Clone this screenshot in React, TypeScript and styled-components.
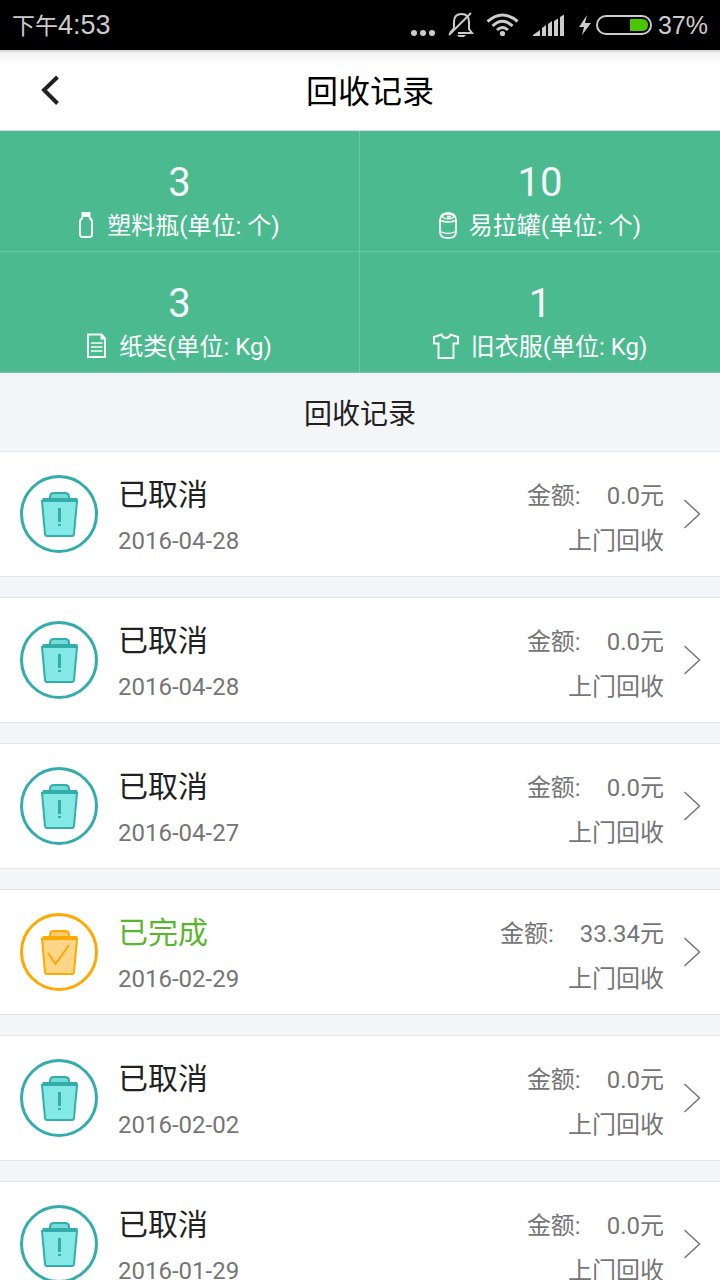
import React from 'react';
import styled, { createGlobalStyle } from 'styled-components';

const GlobalStyle = createGlobalStyle`
  * { box-sizing: border-box; }
  body {
    margin: 0;
    background: #f4f5f7;
    color: #212121;
    font-family: Roboto, "Noto Sans CJK SC", sans-serif;
  }
  h1, h2, h3, p, ul { margin: 0; padding: 0; font-weight: 400; }
`;

const Page = styled.div`
  width: 100%;
  height: 100vh;
  overflow: hidden;
`;

const StatusBar = styled.div`
  display: flex;
  align-items: center;
  justify-content: space-between;
  height: 50px;
  padding: 0 12px;
  background: #000;
  color: #ccc;
`;

const Clock = styled.span`
  font-family: "Liberation Sans", "Noto Sans CJK SC", sans-serif;
  font-size: 27px;
  line-height: 50px;
`;

const ClockPeriod = styled.span`
  font-size: 23px;
`;

const StatusIcons = styled.div`
  display: flex;
  align-items: center;
`;

const Battery = styled.span`
  padding-left: 6px;
  font-family: "Liberation Sans", sans-serif;
  font-size: 25px;
  line-height: 52px;
`;

const Header = styled.header`
  display: grid;
  grid-template-columns: 100px 1fr 80px;
  align-items: center;
  height: 81px;
  border-bottom: 1px solid #dcdcdc;
  background: linear-gradient(#d0d0d0 0, #f2f2f2 3px, #fff 16px);
`;

const BackButton = styled.button`
  display: flex;
  align-items: center;
  justify-content: center;
  height: 80px;
  padding: 0;
  border: 0;
  background: none;
  color: #212121;
`;

const Title = styled.h1`
  padding-top: 4px;
  color: #000;
  font-size: 32px;
  line-height: 40px;
  text-align: center;
`;

const Stats = styled.ul`
  display: grid;
  grid-template-columns: 1fr 1fr;
  list-style: none;
  background: #4bba8f;
  color: #fff;
`;

const StatCell = styled.li`
  display: flex;
  flex-direction: column;
  align-items: center;
  height: 121px;
  padding-top: 28px;
  border-bottom: 1px solid #6dc8a5;
  &:nth-child(odd) { border-right: 1px solid #6dc8a5; }
`;

const StatValue = styled.span`
  color: #f4f5f8;
  font-size: 40px;
  line-height: 48px;
`;

const StatLabel = styled.span<{ $gap: number }>`
  display: flex;
  align-items: center;
  gap: ${(p) => p.$gap}px;
  font-size: 24px;
  line-height: 34px;
  white-space: pre;
`;

const StatText = styled.span`
  padding-top: 2px;
`;

const SectionTitle = styled.h2`
  height: 78px;
  font-size: 28px;
  line-height: 84px;
  text-align: center;
`;

const RecordList = styled.ul`
  display: flex;
  flex-direction: column;
  gap: 20px;
  list-style: none;
`;

const RecordRow = styled.a`
  display: flex;
  align-items: center;
  height: 126px;
  padding: 0 18px 0 20px;
  border: solid #e2e3e5;
  border-width: 1px 0;
  background: #fff;
  color: #757575;
  font-size: 24px;
  text-decoration: none;
`;

const RecordMain = styled.div`
  flex: 1;
  padding: 6px 0 0 20px;
`;

const RecordState = styled.h3<{ $done: boolean }>`
  color: ${(p) => (p.$done ? '#5cb531' : '#212121')};
  font-size: 30px;
  line-height: 48px;
`;

const Line = styled.p`
  line-height: 45px;
`;

const RecordSide = styled.div`
  padding: 10px 19px 0 0;
  text-align: right;
`;

const Amount = styled.span`
  padding-left: 26px;
`;

const BottleIcon = () => (
  <svg width="14" height="26" viewBox="0 0 14 26" fill="none" stroke="#f8fafa" strokeWidth="2" aria-hidden="true">
    <path d="M2.500 0h9v5h-9z" fill="#f8fafa" stroke="none" />
    <path d="M4 5.500Q1 7 1 10v12q0 3 2.500 3h7q2.500 0 2.500-3V10q0-3-3-4.500" />
  </svg>
);

const CanIcon = () => (
  <svg width="18" height="27" viewBox="0 0 18 27" fill="none" stroke="#fff" strokeWidth="1.800" aria-hidden="true">
    <path d="M3.500 2.500Q1 4.500 1 8v11q0 4 2.500 6 5.500 2 11 0Q17 23 17 19V8q0-3.500-2.500-5.500Q9-.5 3.500 2.500z" />
    <ellipse cx="9" cy="4.500" rx="5.500" ry="2.300" strokeWidth="1.300" />
    <path d="M1.500 8.500Q9 11.500 16.500 8.500M1.500 19.500Q9 23.500 16.500 19.500" strokeWidth="1.400" />
    <path d="M8 4.700h4" strokeWidth="2" />
  </svg>
);

const PaperIcon = () => (
  <svg width="20" height="26" viewBox="0 0 20 26" fill="none" stroke="#f8fafa" strokeWidth="2" aria-hidden="true">
    <path d="M1 1.500h13.500L18 5.500V24H1z" />
    <path d="M13.500 1v5.500H19z" fill="#f8fafa" stroke="none" />
    <path d="M4 10h11.500M4 14h11.500M4 18h11.500" strokeWidth="1.600" />
  </svg>
);

const ShirtIcon = () => (
  <svg width="26" height="26" viewBox="0 0 26 26" fill="none" stroke="#f8fafa" strokeWidth="2" aria-hidden="true">
    <path d="M8.500 1.500 1 4v6.500h4.500V25h15V10.500H25V4l-7.500-2.500Q16.500 5 13 5T8.500 1.500z" />
  </svg>
);

const TrashBadge = ({ done }: { done: boolean }) => {
  const main = done ? '#ffa800' : '#33adab';
  const soft = done ? '#ffd587' : '#84e8e4';
  return (
    <svg width="78" height="78" viewBox="0 0 78 78" fill="none" stroke={main} strokeWidth="2" aria-hidden="true">
      <circle cx="39" cy="39" r="37.500" strokeWidth="3" />
      <path d="M30 25v-3q0-4 4-4h11q4 0 4 4v3" fill={done ? '#ffcb6c' : '#74dcd8'} />
      <path d="M22 26h35l-3 33q-.2 2-2 2H27q-1.800 0-2-2z" fill={soft} />
      <path d="M22.500 25h35" strokeWidth="4" />
      {done ? (
        <path d="m28 40 7.500 11L49 32" />
      ) : (
        <path d="M39.500 33v14M39.500 49v2" strokeWidth="3" />
      )}
    </svg>
  );
};

const StatusGlyphs = () => (
  <svg width="242" height="50" viewBox="410 0 242 50" fill="#ccc" aria-hidden="true">
    <circle cx="414" cy="33" r="3" />
    <circle cx="423" cy="33" r="3" />
    <circle cx="432" cy="33" r="3" />
    <g fill="none" stroke="#ccc" strokeWidth="2">
      <path d="M454 28V22q0-8 7.500-8t7.500 8v7l3 4h-14M450 33l4-5" />
      <path d="M449 35 471 13" />
    </g>
    <path d="M457 35h9l-2 2h-5z" />
    <g fill="none" stroke="#ccc" strokeWidth="3">
      <path d="M487.500 21.500Q502.500 8.500 517.500 21.500" />
      <path d="M492.500 26Q502.500 16.500 512.500 26" />
      <path d="M497 30Q502.500 25 508 30" />
    </g>
    <circle cx="502.500" cy="33.500" r="2.600" />
    <path d="M533 36v-1l7-5v6zM542 36v-8l4-3v11zM548 36V24l4-3v15zM554 36V21l4-2.500V36zM560 36V17l4-2.500V36z" />
    <path d="m587 15-8 12h5l-2 8 9-12h-6z" />
    <rect x="597" y="16" width="54" height="18" rx="9" fill="none" stroke="#ccc" strokeWidth="2" />
    <path d="M630 19h12q6 0 6 6t-6 6h-12z" fill="#4ac700" />
  </svg>
);

const stats = [
  { name: '塑料瓶', unit: '个', value: 3, icon: <BottleIcon />, gap: 14 },
  { name: '易拉罐', unit: '个', value: 10, icon: <CanIcon />, gap: 12 },
  { name: '纸类', unit: 'Kg', value: 3, icon: <PaperIcon />, gap: 12 },
  { name: '旧衣服', unit: 'Kg', value: 1, icon: <ShirtIcon />, gap: 12 },
];

const records = [
  { done: false, date: '2016-04-28', amount: '0.0' },
  { done: false, date: '2016-04-28', amount: '0.0' },
  { done: false, date: '2016-04-27', amount: '0.0' },
  { done: true, date: '2016-02-29', amount: '33.34' },
  { done: false, date: '2016-02-02', amount: '0.0' },
  { done: false, date: '2016-01-29', amount: '0.0' },
];

export default function App() {
  return (
    <Page>
      <GlobalStyle />
      <StatusBar>
        <Clock><ClockPeriod>下午</ClockPeriod>4:53</Clock>
        <StatusIcons>
          <StatusGlyphs />
          <Battery>37%</Battery>
        </StatusIcons>
      </StatusBar>
      <Header>
        <BackButton type="button" aria-label="返回">
          <svg width="20" height="30" viewBox="0 0 20 30" fill="none" stroke="currentColor" strokeWidth="4" aria-hidden="true">
            <path d="M17.500 2 4 15l13.500 13.500" />
          </svg>
        </BackButton>
        <Title>回收记录</Title>
      </Header>
      <main>
        <Stats>
          {stats.map((s) => (
            <StatCell key={s.name}>
              <StatValue>{s.value}</StatValue>
              <StatLabel $gap={s.gap}>
                {s.icon}
                <StatText>{s.name}(单位: {s.unit})</StatText>
              </StatLabel>
            </StatCell>
          ))}
        </Stats>
        <SectionTitle>回收记录</SectionTitle>
        <RecordList>
          {records.map((r, i) => (
            <li key={i}>
              <RecordRow href="#">
                <TrashBadge done={r.done} />
                <RecordMain>
                  <RecordState $done={r.done}>{r.done ? '已完成' : '已取消'}</RecordState>
                  <Line>{r.date}</Line>
                </RecordMain>
                <RecordSide>
                  <Line>金额:<Amount>{r.amount}元</Amount></Line>
                  <Line>上门回收</Line>
                </RecordSide>
                <svg width="19" height="30" viewBox="0 0 19 30" fill="none" stroke="#757575" strokeWidth="1.500" aria-hidden="true">
                  <path d="m1.500 1 15 14-15 14" />
                </svg>
              </RecordRow>
            </li>
          ))}
        </RecordList>
      </main>
    </Page>
  );
}
